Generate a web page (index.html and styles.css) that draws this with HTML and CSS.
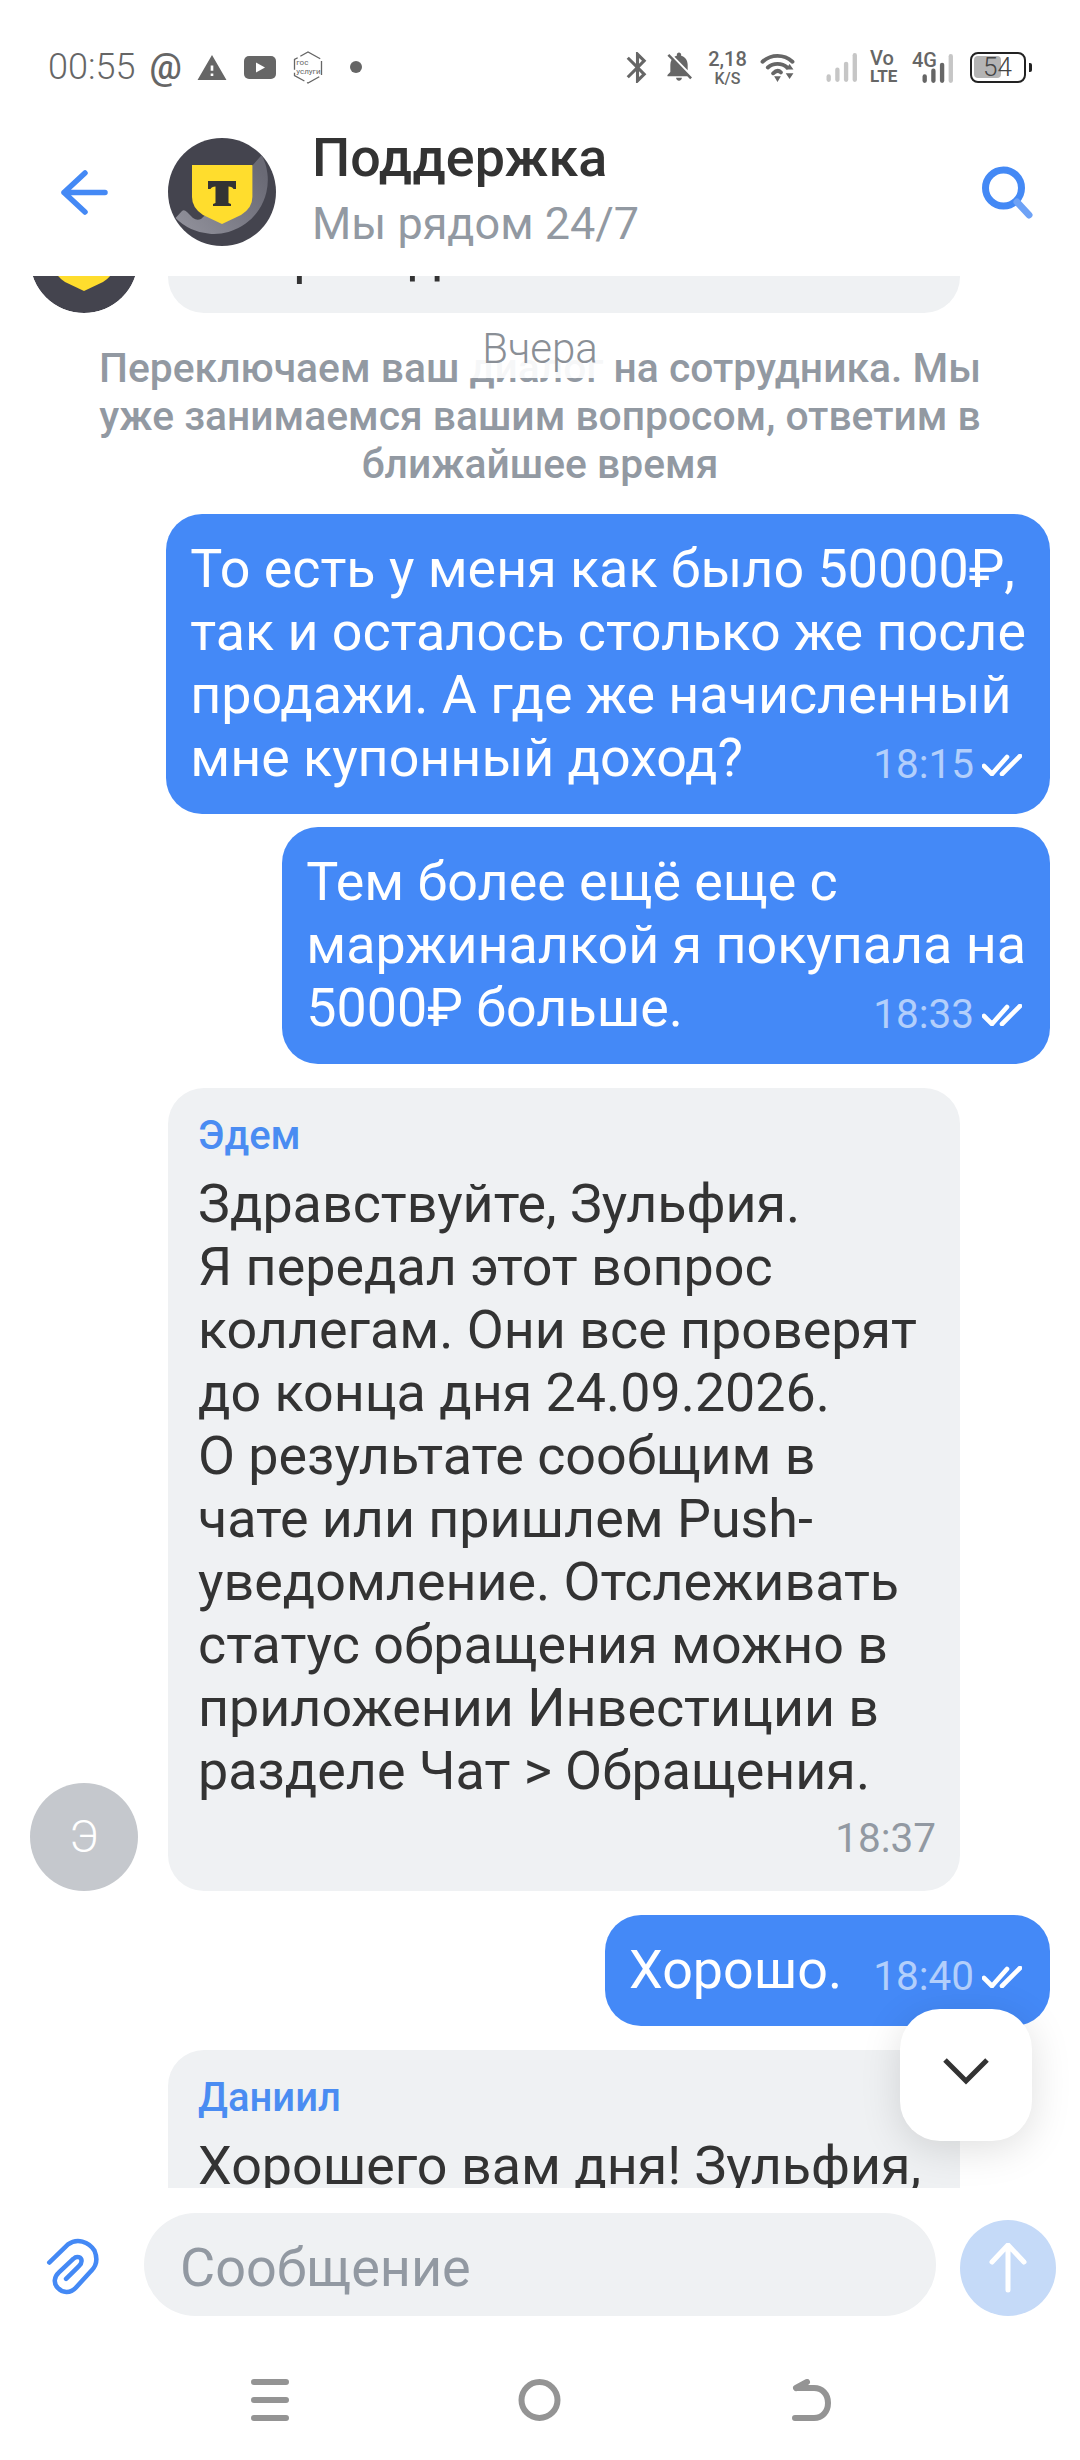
FILE: index.html
```html
<!DOCTYPE html>
<html lang="ru">
<head>
<meta charset="utf-8">
<title>Поддержка</title>
<link rel="stylesheet" href="styles.css">
</head>
<body>
<svg class="defs" width="0" height="0" aria-hidden="true">
  <defs>
    <linearGradient id="wave" x1="0" y1="1" x2="1" y2="0.3">
      <stop offset="0" stop-color="#93939d"/>
      <stop offset="1" stop-color="#6a6a75"/>
    </linearGradient>
    <symbol id="shield" viewBox="0 0 108 108">
      <path d="M24 27H84.400V59Q84.400 70 73 77L54 86L35 77Q24 70 24 59Z" fill="#ffdd2d"/>
      <path d="M40 43H68V51H65.500Q64.500 48.500 60.500 48.500V65L63 66V68H45V66L47.500 65V48.500Q43.500 48.500 42.500 51H40Z" fill="#333"/>
    </symbol>
    <symbol id="dblcheck" viewBox="0 0 40 22">
      <path d="M2 12L10 20L25 3M20 20L38 2" fill="none" stroke="#fff" stroke-width="4.600" stroke-linecap="round" stroke-linejoin="round"/>
    </symbol>
  </defs>
</svg>
<div class="screen">
  <div class="status">
    <div class="status-left">
      <span class="clock">00:55</span>
      <span class="at">@</span>
      <svg class="i-warn" viewBox="1 2 22 19"><path d="M1 21h22L12 2 1 21zm12-3h-2v-2h2v2zm0-4h-2v-4h2v4z" fill="#666"/></svg>
      <svg class="i-yt" viewBox="0 0 32 23"><rect width="32" height="23" rx="5" fill="#666"/><path d="M12 6.500L21 11.500L12 16.500Z" fill="#fff"/></svg>
      <span class="gov">
        <svg class="gov-hex" viewBox="0 0 30 33"><path d="M15 1L28.500 8.500V24.500L15 32L1.500 24.500V8.500Z" fill="none" stroke="#666" stroke-width="1.300" stroke-dasharray="14 3"/></svg>
        <span class="gov-txt">гос<br>услуги</span>
      </span>
      <span class="dot"></span>
    </div>
    <div class="status-right">
      <svg class="i-bt" viewBox="5 2 12.700 20"><path d="M17.710 7.710L12 2h-1v7.590L6.410 5 5 6.410 10.590 12 5 17.590 6.410 19 11 14.410V22h1l5.710-5.710-4.300-4.290 4.300-4.290zM13 5.830l1.880 1.880L13 9.590V5.830zm1.880 10.460L13 18.170v-3.760l1.880 1.880z" fill="#666"/></svg>
      <svg class="i-bell" viewBox="3 2.500 18 20"><path d="M20 18.690L7.840 6.140 5.270 3.490 4 4.760l2.800 2.800v.01c-.52.99-.8 2.160-.8 3.420v5l-2 2v1h13.730l2 2L21 19.720l-1-1.030zM12 22c1.110 0 2-.89 2-2h-4c0 1.110.89 2 2 2zm6-7.320V11c0-3.080-1.640-5.640-4.500-6.320V4c0-.83-.67-1.500-1.500-1.500s-1.500.67-1.500 1.500v.68c-.15.03-.29.08-.42.12-.1.03-.2.07-.3.11h-.01c-.2.08-.4.18-.59.27-.1.05-.2.11-.3.16L18 14.680z" fill="#666"/></svg>
      <span class="speed"><span class="speed-v">2,18</span><span class="speed-u">K/S</span></span>
      <svg class="i-wifi" viewBox="0 0 35 30">
        <path d="M2 9C11 1 24 1 33 9M7.500 15C13 10 22 10 27.500 15M13 21C16 18 19 18 21 20" fill="none" stroke="#666" stroke-width="4" stroke-linecap="round"/>
        <path d="M14 24H21L17.500 30ZM26 17L30 11.500L34 17ZM26 21H34L30 27Z" fill="#666"/>
      </svg>
      <svg class="i-sig" viewBox="0 0 31 30">
        <g fill="#c6c6c6"><rect x="0" y="22" width="4.500" height="8" rx="2.200"/><rect x="9" y="15" width="4.500" height="15" rx="2.200"/><rect x="18" y="9" width="4.500" height="21" rx="2.200"/><rect x="27" y="0" width="4.500" height="30" rx="2.200"/></g>
      </svg>
      <span class="volte"><span>Vo</span><span>LTE</span></span>
      <span class="net">
        <span class="net-g">4G</span>
        <svg class="i-bars" viewBox="0 0 31 30">
          <rect x="0" y="21" width="4.500" height="9" rx="2.200" fill="#666"/><rect x="9" y="15" width="4.500" height="15" rx="2.200" fill="#666"/><rect x="18" y="9" width="4.500" height="21" rx="2.200" fill="#666"/><rect x="27" y="0" width="4.500" height="30" rx="2.200" fill="#c6c6c6"/>
        </svg>
      </span>
      <span class="batt"><span class="batt-body"><span class="batt-fill"></span><span class="batt-txt">54</span></span><span class="batt-tip"></span></span>
    </div>
  </div>

  <header class="head">
    <svg class="i-back" viewBox="0 0 47 45"><path d="M24 3L3 22.500L24 42M3 22.500H44" fill="none" stroke="#4489f5" stroke-width="5.500" stroke-linecap="round" stroke-linejoin="round"/></svg>
    <svg class="logo" viewBox="0 0 108 108">
      <circle cx="54" cy="54" r="54" fill="#44444e"/>
      <path d="M7.500 80L14 73Q16 71 19 74L25 80Q29 83 33 81L58 58L93.700 17A54 54 0 0 1 7.500 80Z" fill="url(#wave)"/>
      <use href="#shield" width="108" height="108"/>
    </svg>
    <div class="head-txt">
      <div class="title">Поддержка</div>
      <div class="sub">Мы рядом 24/7</div>
    </div>
    <svg class="i-search" viewBox="0 0 51 53"><circle cx="21.500" cy="22" r="18" fill="none" stroke="#4489f5" stroke-width="7"/><path d="M35 36L47 49" fill="none" stroke="#6ea2f6" stroke-width="7" stroke-linecap="round"/></svg>
  </header>

  <main class="chat">
    <div class="feed">
      <div class="row row-first">
        <svg class="avatar" viewBox="0 0 108 108">
          <circle cx="54" cy="54" r="54" fill="#44444e"/>
          <use href="#shield" width="108" height="108"/>
        </svg>
        <div class="bubble in"><div class="line-one">Вопрос: дайте</div></div>
      </div>
      <div class="system">Переключаем ваш диалог на сотрудника. Мы<br>уже занимаемся вашим вопросом, ответим в<br>ближайшее время</div>

      <div class="row out">
        <div class="bubble mine">
          То есть у меня как было 50000₽,<br>так и осталось столько же после<br>продажи. А где же начисленный
          <div class="last"><span>мне купонный доход?</span><span class="meta"><span class="time">18:15</span><svg class="checks"><use href="#dblcheck"/></svg></span></div>
        </div>
      </div>
      <div class="row out gap-s">
        <div class="bubble mine">
          Тем более ещё еще с<br>маржиналкой я покупала на
          <div class="last"><span>5000₽ больше.</span><span class="meta"><span class="time">18:33</span><svg class="checks"><use href="#dblcheck"/></svg></span></div>
        </div>
      </div>
      <div class="row gap-l">
        <div class="avatar letter">Э</div>
        <div class="bubble in">
          <div class="name">Эдем</div>
          <div class="body">Здравствуйте, Зульфия.<br>Я передал этот вопрос<br>коллегам. Они все проверят<br>до конца дня 24.09.2026.<br>О результате сообщим в<br>чате или пришлем Push-<br>уведомление. Отслеживать<br>статус обращения можно в<br>приложении Инвестиции в<br>разделе Чат &gt; Обращения.</div>
          <div class="time-in">18:37</div>
        </div>
      </div>
      <div class="row out gap-l">
        <div class="bubble mine">
          <div class="last last-solo"><span>Хорошо.</span><span class="meta"><span class="time">18:40</span><svg class="checks"><use href="#dblcheck"/></svg></span></div>
        </div>
      </div>
      <div class="row gap-l">
        <div class="avatar-space"></div>
        <div class="bubble in">
          <div class="name">Даниил</div>
          <div class="body">Хорошего вам дня! Зульфия,<br>если появятся вопросы,<br>обращайтесь.</div>
        </div>
      </div>
    </div>
    <div class="date">Вчера</div>
    <button class="to-bottom" type="button" aria-label="Вниз">
      <svg viewBox="0 0 46 28"><path d="M2 3L23 24L44 3" fill="none" stroke="#333" stroke-width="5"/></svg>
    </button>
  </main>

  <footer class="composer">
    <svg class="i-clip" viewBox="130 140 170 185" preserveAspectRatio="none"><path d="M140 217L198 160C225 140 262 150 280 180C290 205 285 228 270 243L222 296C205 315 180 312 167 297C152 282 155 262 170 248L215 205C225 195 240 200 240 212C240 222 235 225 228 232L192 268" fill="none" stroke="#4489f5" stroke-width="14" stroke-linecap="round" stroke-linejoin="round"/></svg>
    <div class="input">Сообщение</div>
    <div class="send"><svg viewBox="0 0 38 50"><path d="M3 19L19 2L35 19M19 3V47" fill="none" stroke="#fff" stroke-width="5" stroke-linecap="round" stroke-linejoin="round"/></svg></div>
  </footer>

  <nav class="nav">
    <svg class="nav-menu" viewBox="0 0 38 42"><path d="M3 3H35M3 21H35M3 39H35" fill="none" stroke="#949494" stroke-width="6" stroke-linecap="round"/></svg>
    <svg class="nav-home" viewBox="0 0 43 42"><circle cx="21.500" cy="21" r="18" fill="none" stroke="#949494" stroke-width="6"/></svg>
    <svg class="nav-back" viewBox="0 0 39 42"><path d="M3 39H22C30 39 36 33 36 24C36 15 30 9 22 9H5M4 9L15 3" fill="none" stroke="#949494" stroke-width="6" stroke-linecap="round" stroke-linejoin="round"/></svg>
  </nav>
</div>
</body>
</html>
```

FILE: styles.css
```css
* { box-sizing: border-box; }
html, body { margin: 0; padding: 0; background: #fff; }
body { font-family: Roboto, "Noto Sans", sans-serif; color: #333; }
.defs { position: absolute; }
.screen { width: 1080px; height: 2460px; display: flex; flex-direction: column; overflow: hidden; background: #fff; }

/* status bar */
.status { height: 120px; flex: none; padding: 14px 48px 0 48px; display: flex; justify-content: space-between; align-items: center; color: #666; }
.status-left, .status-right { display: flex; align-items: center; }
.clock { font-size: 36px; font-weight: 300; line-height: 40px; }
.at { font-size: 36px; line-height: 40px; margin-left: 14px; width: 31px; text-align: center; font-weight: 500; }
.i-warn { width: 30px; height: 25px; margin-left: 17px; }
.i-yt { width: 32px; height: 23px; margin-left: 17px; }
.gov { position: relative; width: 30px; height: 33px; margin-left: 17px; display: flex; align-items: center; justify-content: center; }
.gov-hex { position: absolute; inset: 0; width: 30px; height: 33px; }
.gov-txt { font-size: 8px; line-height: 9px; position: relative; }
.dot { width: 12px; height: 12px; border-radius: 50%; background: #666; margin-left: 27px; }
.i-bt { width: 23px; height: 31px; }
.i-bell { width: 26px; height: 32px; margin-left: 18px; }
.speed { display: flex; flex-direction: column; align-items: center; width: 37px; margin-left: 17px; font-weight: 500; }
.speed-v { font-size: 20px; line-height: 20px; }
.speed-u { font-size: 16px; line-height: 15px; margin-top: 2px; }
.i-wifi { width: 35px; height: 29px; margin-left: 14px; }
.i-sig { width: 31px; height: 29px; margin-left: 31px; }
.volte { display: flex; flex-direction: column; width: 28px; margin-left: 13px; font-weight: 500; }
.volte span:first-child { font-size: 20px; line-height: 18px; }
.volte span:last-child { font-size: 17px; line-height: 18px; font-weight: 700; }
.net { position: relative; width: 41px; height: 32px; margin-left: 14px; }
.net-g { position: absolute; left: 0; top: 0; font-size: 20px; line-height: 18px; font-weight: 500; }
.i-bars { position: absolute; right: 0; bottom: 0; width: 31px; height: 29px; }
.batt { display: flex; align-items: center; margin-left: 17px; }
.batt-body { position: relative; width: 56px; height: 31px; border: 2.5px solid #222; border-radius: 8px; display: flex; align-items: center; }
.batt-fill { width: 27px; height: 22px; margin-left: 1.5px; border-radius: 4px; background: #b4b4b4; }
.batt-txt { position: absolute; left: 11px; top: 0; font-size: 26px; line-height: 26px; font-weight: 300; color: #444; }
.batt-tip { width: 3px; height: 9px; margin-left: 3px; background: #222; border-radius: 0 2px 2px 0; }

/* header */
.head { height: 156px; flex: none; padding: 18px 47px 30px 61px; display: flex; align-items: center; background: #fff; position: relative; z-index: 2; }
.i-back { width: 47px; height: 45px; flex: none; }
.logo { width: 108px; height: 108px; margin-left: 60px; flex: none; }
.head-txt { margin-left: 36px; }
.title { font-size: 53.800px; line-height: 62px; font-weight: 500; color: #333; }
.sub { font-size: 45px; line-height: 68px; padding-top: 1px; color: #9299a2; }
.i-search { width: 51px; height: 53px; margin-left: auto; flex: none; }

/* chat */
.chat { position: relative; height: 1912px; flex: none; overflow: hidden; }
.feed { margin-top: -71px; display: flex; flex-direction: column; }
.row { display: flex; align-items: flex-end; padding: 0 30px; gap: 30px; flex: none; }
.row.out { justify-content: flex-end; }
.gap-s { margin-top: 13px; }
.gap-l { margin-top: 24px; }
.avatar { width: 108px; height: 108px; flex: none; border-radius: 50%; }
.avatar-space { width: 108px; flex: none; }
.letter { background: #c5c8cd; color: #fff; display: flex; align-items: center; justify-content: center; font-size: 44px; font-weight: 300; }
.bubble { border-radius: 36px; font-size: 53.800px; line-height: 63px; padding: 23px 24px 25px; }
.bubble.in { width: 792px; background: #eff1f3; color: #333; padding: 28px 24px 27px 30px; }
.bubble.mine { background: #4489f7; color: #fff; }
.row-first .bubble.in { padding-bottom: 27px; padding-top: 18px; }
.line-one { white-space: nowrap; }
.name { font-size: 40px; line-height: 40px; font-weight: 500; color: #4a8cf2; margin-bottom: 16px; }
.time-in { font-size: 40.500px; line-height: 47px; text-align: right; color: #9299a2; margin-top: 13px; padding-bottom: 2px; }
.last { display: flex; justify-content: space-between; align-items: flex-end; }
.last-solo { gap: 31px; }
.meta { display: flex; align-items: center; height: 47px; margin: 0 4px 1px 0; }
.time { font-size: 40.500px; line-height: 47px; color: rgba(255,255,255,.6); }
.checks { width: 40px; height: 22px; margin-left: 8px; }
.system { margin: 31px 90px 26px; font-size: 40.800px; line-height: 48px; font-weight: 500; color: #9299a2; text-align: center; }
.date { position: absolute; left: 470px; top: 48px; width: 140px; height: 54px; background: rgba(255,255,255,.92); color: #8a8f96; font-size: 42px; font-weight: 300; line-height: 50px; text-align: center; }
.to-bottom { position: absolute; right: 48px; bottom: 47px; width: 132px; height: 132px; border: 0; border-radius: 40px; background: #fff; box-shadow: 0 8px 40px rgba(0,0,0,.13); display: flex; align-items: center; justify-content: center; padding: 0; }
.to-bottom svg { width: 46px; height: 28px; margin-top: -8px; }

/* composer */
.composer { height: 128px; flex: none; padding: 25px 24px 0 46px; display: flex; align-items: flex-end; position: relative; }
.i-clip { width: 55px; height: 59px; flex: none; margin-bottom: 19px; }
.input { width: 792px; height: 103px; margin-left: 43px; border-radius: 52px; background: #eff1f3; color: #9299a2; font-size: 54px; line-height: 103px; padding: 3px 0 0 36px; flex: none; }
.send { width: 96px; height: 96px; margin-left: 24px; border-radius: 50%; background: #c5daf8; display: flex; align-items: center; justify-content: center; flex: none; }
.send svg { width: 38px; height: 50px; }

/* nav */
.nav { flex: 1; display: flex; align-items: flex-start; padding: 63px 0 0 251px; }
.nav-menu { width: 38px; height: 42px; flex: none; }
.nav-home { width: 43px; height: 42px; flex: none; margin-left: 229px; }
.nav-back { width: 39px; height: 42px; flex: none; margin-left: 231px; }
```
